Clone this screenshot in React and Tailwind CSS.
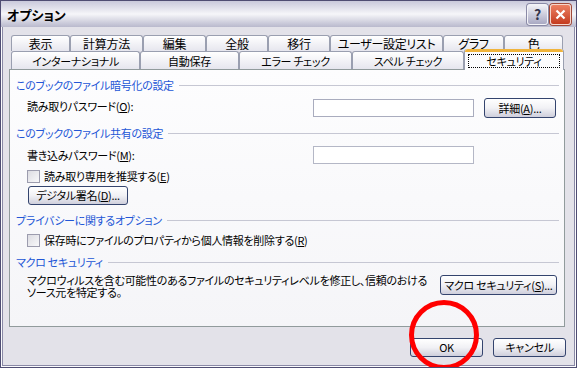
import React from "react";

const row1Tabs = [
  ["表示", "w-[59px]"],
  ["計算方法", "w-[73px]"],
  ["編集", "w-[63px]"],
  ["全般", "w-[62px]"],
  ["移行", "w-[62px]"],
  ["ユーザー設定リスト", "w-[113px]"],
  ["グラフ", "w-[61px]"],
  ["色", "w-[59px]"],
];

const row2Tabs = [
  ["インターナショナル", "w-[129px]"],
  ["自動保存", "w-[99px]"],
  ["エラー チェック", "w-[113px]"],
  ["スペル チェック", "w-[112px]"],
];

const tabCls =
  "flex shrink-0 items-center justify-center rounded-t-[3px] border border-b-0 border-[#9a9fb0] bg-linear-to-b from-white to-[#e6e6ee] whitespace-nowrap";

const btnCls =
  "flex shrink-0 items-center justify-center rounded-[3px] border border-[#34446e] bg-linear-to-b from-white via-[#f1f1f5] to-[#cfcfdc] whitespace-nowrap text-black";

function Key({ k }) {
  return <span className="underline underline-offset-1">{k}</span>;
}

function GroupHeader({ children }) {
  return (
    <div className="mt-[9px] flex h-[13px] items-center pl-[6px] pr-[5px]">
      <span className="whitespace-nowrap text-[#2356d6]">{children}</span>
      <div className="ml-[5px] h-px flex-1 bg-[#c6c7d3]" />
    </div>
  );
}

function CheckBox({ children, className = "" }) {
  return (
    <div className={`ml-[17px] flex h-[14px] items-center gap-[4px] ${className}`}>
      <div className="h-[13px] w-[13px] shrink-0 border border-[#9c9cae] bg-linear-to-br from-[#dcdce2] to-[#f8f8fa]" />
      <span className="whitespace-nowrap">{children}</span>
    </div>
  );
}

export default function App() {
  return (
    <div className="relative h-[368px] w-[577px] overflow-hidden border border-[#4f4d73] bg-[#e3e2e9] font-['Noto_Sans_CJK_JP','Liberation_Sans',sans-serif] text-[11px] leading-none tracking-[-0.3px] text-black [font-feature-settings:'palt']">
      {/* title bar */}
      <div className="flex h-[26px] items-center bg-linear-to-b from-[#c9c9db] via-[#f6f6f9] to-[#b9b9cd] pl-[6px] pr-[5px]">
        <span className="text-[13px] font-bold tracking-normal">オプション</span>
        <div className="ml-auto flex gap-[2px]">
          <div className="flex h-[21px] w-[21px] items-center justify-center rounded-[3px] border border-[#f4f4f8] bg-linear-to-b from-[#f2f2f7] to-[#a9a9c3] text-[14px] font-bold text-[#34344c] shadow-[0_0_0_1px_#8a8aa6]">
            ?
          </div>
          <div className="flex h-[21px] w-[21px] items-center justify-center rounded-[3px] border border-[#f6d6cc] bg-linear-to-b from-[#ec7f62] to-[#c43a1d] shadow-[0_0_0_1px_#a04a3a]">
            <svg width="11" height="11" viewBox="0 0 11 11">
              <path d="M1.5 1.5 L9.5 9.5 M9.5 1.5 L1.5 9.5" stroke="white" strokeWidth="2.2" />
            </svg>
          </div>
        </div>
      </div>

      {/* body */}
      <div className="h-[340px] border-x border-b border-[#fbfbfd]">
        <div className="flex h-[339px] flex-col border-x border-b border-[#8a89a6]">
          {/* tabs row 1 */}
          <div className="ml-[8px] mt-[8px] flex h-[16px] text-[12px]">
            {row1Tabs.map(([t, w]) => (
              <div key={t} className={`${tabCls} ${w} pt-[1px]`}>
                {t}
              </div>
            ))}
          </div>
          {/* tabs row 2 */}
          <div className="ml-[8px] flex h-[18px] items-end">
            {row2Tabs.map(([t, w]) => (
              <div key={t} className={`${tabCls} ${w} h-[18px] pt-[2px]`}>
                {t}
              </div>
            ))}
            <div className="relative z-10 -mb-px flex h-[21px] w-[100px] shrink-0 flex-col rounded-t-[3px] border-x border-[#9a9fb0] bg-[#fcfcfe]">
              <div className="h-[3px] rounded-t-[3px] bg-[#f0b43c]" />
              <div className="mx-[3px] mt-[2px] flex h-[14px] items-center justify-center border border-dotted border-black">
                セキュリティ
              </div>
            </div>
          </div>

          {/* panel */}
          <div className="ml-[6px] flex h-[258px] w-[556px] flex-col border border-[#919b9c] bg-linear-to-b from-[#fdfdfe] to-[#f5f5f8]">
            <GroupHeader>このブックのファイル暗号化の設定</GroupHeader>
            <div className="ml-[17px] mt-[6px] flex h-[20px] items-center">
              <span className="w-[286px] -translate-y-[2px] whitespace-nowrap">
                読み取りパスワード(<Key k="O" />):
              </span>
              <div className="h-[18px] w-[161px] border border-[#a9acbe] bg-white" />
              <div className={`${btnCls} ml-[10px] h-[20px] w-[72px]`}>
                詳細(<Key k="A" />)...
              </div>
            </div>

            <GroupHeader>このブックのファイル共有の設定</GroupHeader>
            <div className="ml-[17px] mt-[6px] flex h-[18px] items-center">
              <span className="w-[286px] whitespace-nowrap">
                書き込みパスワード(<Key k="M" />):
              </span>
              <div className="h-[18px] w-[161px] border border-[#b4b7c6] bg-white" />
            </div>
            <CheckBox className="mt-[5px]">
              読み取り専用を推奨する(<Key k="E" />)
            </CheckBox>
            <div className={`${btnCls} ml-[18px] mt-[3px] h-[19px] w-[100px]`}>
              デジタル署名(<Key k="D" />)...
            </div>

            <GroupHeader>プライバシーに関するオプション</GroupHeader>
            <CheckBox className="mt-[6px]">
              保存時にファイルのプロパティから個人情報を削除する(<Key k="R" />)
            </CheckBox>

            <GroupHeader>マクロ セキュリティ</GroupHeader>
            <div className="mt-[5px] flex pr-[7px]">
              <p className="ml-[17px] whitespace-nowrap leading-[12px]">
                マクロウィルスを含む可能性のあるファイルのセキュリティレベルを修正し、信頼のおける
                <br />
                ソース元を特定する。
              </p>
              <div className={`${btnCls} ml-auto mt-px h-[20px] w-[117px]`}>
                マクロ セキュリティ(<Key k="S" />)...
              </div>
            </div>
          </div>

          {/* dialog buttons */}
          <div className="mt-[11px] flex justify-end gap-[10px] pr-[8px]">
            <div className={`${btnCls} h-[19px] w-[73px]`}>OK</div>
            <div className={`${btnCls} h-[19px] w-[73px]`}>キャンセル</div>
          </div>
        </div>
      </div>

      {/* red annotation circle */}
      <div className="absolute left-[408px] top-[299px] h-[70px] w-[70px] rounded-full border-[5px] border-[#ff0000]" />
    </div>
  );
}
